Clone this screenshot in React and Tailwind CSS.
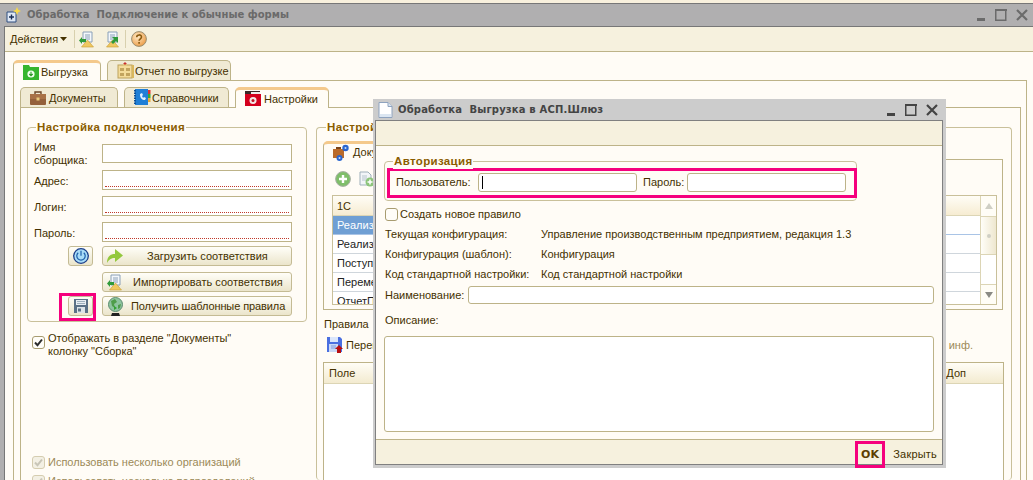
const Controls = ({ c }) => (
  <svg width="52" height="14" viewBox="0 0 52 14" className="shrink-0" style={{ color: c }}>
    <rect x="0" y="10" width="8" height="3" fill="currentColor" />
    <rect x="18.75" y="1.75" width="10" height="10.5" fill="none" stroke="currentColor" strokeWidth="1.5" />
    <rect x="18" y="1" width="12" height="2" fill="currentColor" />
    <path d="M40 2 L50 12 M50 2 L40 12" stroke="currentColor" strokeWidth="2.2" fill="none" />
  </svg>
);
const WinIcon = () => (
  <svg width="16" height="16" viewBox="0 0 16 16"><path d="M1 5h9v10H1z" fill="#dfe8f5" stroke="#2f4f80" /><path d="M3 10h5M5.5 7.5v5" stroke="#1a2f55" strokeWidth="1.4" /><path d="M11 0l1.2 2.8L15 4l-2.8 1.2L11 8 9.8 5.2 7 4l2.8-1.2z" fill="#f7d94a" /></svg>
);
const DocArrow = ({ flip }) => (
  <svg width="17" height="17" viewBox="0 0 17 17"><path d="M4 1h9v10H4z" fill="#f4f7fb" stroke="#8aa0b8" /><path d="M6 4h5M6 6h5M6 8h5" stroke="#8aa0b8" /><path d="M8.5 9l6 7h-12z" fill="#f0c860" stroke="#c89b30" strokeWidth=".6" />{flip ? <path d="M8 6l6 0v6l-2-2-3 3-2-2 3-3z" fill="#2f9a3a" /> : <path d="M7 8H3V6L0 9.5 3 13v-2h4z" fill="#2f9a3a" />}</svg>
);
const Help = () => (
  <svg width="16" height="16" viewBox="0 0 16 16"><defs><radialGradient id="h" cx=".4" cy=".35" r=".8"><stop offset="0" stopColor="#ffe9c4" /><stop offset="1" stopColor="#e88f32" /></radialGradient></defs><circle cx="8" cy="8" r="7.4" fill="url(#h)" stroke="#9a8f72" /><path d="M5.7 6.2c0-3 4.8-3 4.8-.2 0 1.8-2.4 1.800-2.400 3.800M8.100 11v1.800" fill="none" stroke="#8a5a10" strokeWidth="1.6" /></svg>
);
const GreenFolder = () => (
  <svg width="17" height="17" viewBox="0 0 17 17"><path d="M0 1h6l1 2h9v13H0z" fill="#36b52f" /><circle cx="8" cy="10" r="3.600" fill="#f2fff0" /><path d="M8 7.800v3.600M6.300 10l1.700 1.700L9.700 10" stroke="#2c9a27" fill="none" strokeWidth="1.100" /></svg>
);
const Notes = () => (
  <svg width="17" height="17" viewBox="0 0 17 17"><rect x="1" y="3" width="14" height="13" fill="#f4dc9a" stroke="#bca15c" /><path d="M3 6h4v3H3zM9 6h4v3H9zM3 11h4v3H3zM9 11h4v3H9z" fill="#c2a45e" /><path d="M6 2h4v2H6z" fill="#e2c77e" /><path d="M8 0v3M6.500 1.500h3" stroke="#c9302c" /><rect x="15" y="3" width="2" height="13" fill="#d9b75c" /></svg>
);
const Case = () => (
  <svg width="16" height="16" viewBox="0 0 16 16"><path d="M5 4V2h6v2" fill="none" stroke="#6b4526" strokeWidth="1.400" /><rect x="0" y="4" width="16" height="11" rx="1" fill="#94603a" /><rect x="0" y="4" width="16" height="5" fill="#a87146" /><rect x="6.500" y="7.500" width="3" height="3" fill="#e8c87a" /></svg>
);
const BlueBook = () => (
  <svg width="17" height="17" viewBox="0 0 17 17"><rect x="1" y="0" width="13" height="16" fill="#1f7fd6" /><path d="M1 1v14" stroke="#0c4f96" strokeWidth="2" strokeDasharray="1.500 1" /><path d="M6 5c0 4 2 6 5 6l1-2-2-1-1 1-1-2 1-1-1-2z" fill="#dff1ff" /><rect x="14" y="1" width="2.500" height="4" fill="#d33" /><rect x="14" y="5" width="2.500" height="4" fill="#3a3" /><rect x="14" y="9" width="2.500" height="4" fill="#ea3" /></svg>
);
const RedFolder = () => (
  <svg width="16" height="16" viewBox="0 0 16 16"><path d="M0 0h15v3H0z" fill="#3a2a2a" /><rect x="6" y="1" width="9" height="3" fill="#eee" /><path d="M0 3h16v12H0z" fill="#d4001e" /><circle cx="8" cy="9.500" r="3.500" fill="#f4e6e6" /><circle cx="8" cy="9.500" r="1.500" fill="#c01020" /></svg>
);
const Power = () => (
  <svg width="16" height="16" viewBox="0 0 16 16"><circle cx="8" cy="8" r="7.300" fill="#a8dcf8" stroke="#1d3f8a" strokeWidth="1.300" /><path d="M5.200 4.800a4.200 4.200 0 1 0 5.600 0" fill="none" stroke="#1d5faa" strokeWidth="1.200" /><path d="M8 2.800v5" stroke="#1d5faa" strokeWidth="1.200" /></svg>
);
const Floppy = () => (
  <svg width="16" height="16" viewBox="0 0 16 16"><rect x="1" y="1" width="14" height="14" fill="#5b7186" /><rect x="3" y="2" width="10" height="5" fill="#e8eef2" /><path d="M4 3.500h8M4 5.500h8" stroke="#9fb0bd" /><rect x="4" y="9" width="8" height="6" fill="#dde4e8" /><rect x="5" y="10.500" width="3" height="3" fill="#5b7186" /></svg>
);
const GreenArrow = () => (
  <svg width="18" height="16" viewBox="0 0 18 16"><path d="M1 15c0-6 3-9 8-9V1l8 6.500L9 14V10c-4 0-6 1.500-8 5z" fill="#93c83d" /></svg>
);
const Globe = () => (
  <svg width="17" height="19" viewBox="0 0 17 19"><circle cx="8.500" cy="7.500" r="7" fill="#8fc4a0" stroke="#5c8c70" /><path d="M4 4l4-2 2 3-3 2 1 4-3-2zM11 8l3-1-1 4-2 1z" fill="#4f9d4a" /><path d="M5 16h7l1 3H4z" fill="#222" /><path d="M7 9l3 2-3 2z" fill="#2fa32f" /></svg>
);
const Gears = () => (
  <svg width="17" height="17" viewBox="0 0 17 17"><rect x="0" y="5" width="11" height="9" fill="#b96a2a" /><rect x="3" y="3" width="5" height="2" fill="#7a4218" /><circle cx="12.500" cy="4" r="3.200" fill="#2a66d0" /><circle cx="12.500" cy="4" r="1" fill="#cde" /><circle cx="6.500" cy="14" r="3" fill="#2a66d0" /><circle cx="6.500" cy="14" r="1" fill="#cde" /></svg>
);
const AddGreen = () => (
  <svg width="16" height="16" viewBox="0 0 16 16"><circle cx="8" cy="8" r="7.400" fill="#7fbe6a" stroke="#a9b0a6" /><path d="M8 4v8M4 8h8" stroke="#fff" strokeWidth="2.400" /></svg>
);
const DocPlus = () => (
  <svg width="16" height="16" viewBox="0 0 16 16"><path d="M1 1h8l3 3v10H1z" fill="#f2f5f8" stroke="#9fb0ba" /><path d="M3 5h5M3 7h5M3 9h4" stroke="#b7c4cc" /><circle cx="11" cy="11" r="4.500" fill="#8cc47a" /><path d="M11 8.500v5M8.500 11h5" stroke="#fff" strokeWidth="1.500" /></svg>
);
const SaveRed = () => (
  <svg width="16" height="16" viewBox="0 0 16 16"><path d="M0 0h13l2 2v13H0z" fill="#4a6fe0" /><rect x="3" y="0" width="8" height="5" fill="#dbe6fb" /><rect x="2" y="7" width="9" height="8" fill="#c9d8f6" /><path d="M4 9h5M4 11h5" stroke="#7f9be0" /><path d="M12 8l4 4h-2v4h-4v-4H8z" fill="#b80d10" /></svg>
);
const Chk = ({ on, off }) => (
  <span className={`w-[13px] h-[13px] rounded-[3px] border flex items-center justify-center shrink-0 ${off ? 'border-[#d5cdb0] bg-[#f3f0e4]' : 'border-[#a89c70] bg-[#fffdf8]'}`}>
    {on && <svg width="9" height="9" viewBox="0 0 9 9"><path d="M1 4.500l2.500 2.700L8 1.500" fill="none" stroke={off ? '#c9c6b8' : '#2c2c2c'} strokeWidth="2" /></svg>}
  </span>
);
const Tab = ({ active, w, h, icon, children, gap = 'gap-[3px]', pl = 'pl-[9px]' }) => (
  <div className={`${w} ${h} ${active ? 'bg-[#fffcf6] border-t-[3px] border-t-[#f4c98c] -mb-px z-10 border-b-0' : 'bg-[#f0ead4]'} border-x border-[#bdb388] ${active ? '' : 'border-t'} rounded-t-[5px] flex items-center ${gap} ${pl} shrink-0 relative whitespace-nowrap`}>
    {icon}<span>{children}</span>
  </div>
);
const Field = ({ dotted, w = 'w-[190px]', h = 'h-[20px]' }) => (
  <div className={`${w} ${h} border border-[#bdb388] bg-white flex flex-col justify-end px-[2px] pb-[2px]`}>
    {dotted && <div className="border-b border-dotted border-[#c0392b]" />}
  </div>
);
const Btn = ({ icon, children, pl, mt, h = 'h-[20px]' }) => (
  <div className={`w-[190px] ${h} ${mt} rounded-[3px] border border-[#c4bb94] bg-gradient-to-b from-[#fffef8] to-[#ebe5cb] flex items-center pl-[2px] whitespace-nowrap`}>
    <span className="w-[20px] flex justify-center shrink-0">{icon}</span>
    <span className={pl}>{children}</span>
  </div>
);
const IconBtn = ({ children }) => (
  <div className="w-[25px] h-[20px] rounded-[3px] border border-[#c4bb94] bg-gradient-to-b from-[#fffef8] to-[#ebe5cb] flex items-center justify-center">{children}</div>
);
const Legend = ({ children, cls }) => (
  <span className={`absolute -top-[8px] ${cls} bg-[#fffcf6] px-[1px] text-[#8a5c00] font-bold text-[11.500px] leading-[15px] tracking-[0.35px] whitespace-nowrap`}>{children}</span>
);
const Row = ({ label, children, mt = 'mt-[6px]' }) => (
  <div className={`flex items-center ${mt}`}>
    <span className="w-[64px] pl-[1px] pt-[2px] mr-[5px]">{label}</span>
    {children}
  </div>
);
const rows = ['Реализация', 'Реализация', 'Поступление', 'Перемещение', 'ОтчетПроизводства'];

export default function App() {
  return (
    <div className="w-[1033px] h-[480px] relative overflow-hidden bg-[#f5eedd] font-['Liberation_Sans',sans-serif] text-[11px] leading-[14px] text-[#443100]">
      <div className="h-[3px] bg-[#f8f0dd]" />
      <div className="h-[477px] border-t border-[#777] bg-[#b0afb0] flex flex-col">
        <div className="h-[22px] flex items-center pl-[6px] pr-[4px] shrink-0">
          <WinIcon />
          <span className="ml-[5px] font-['DejaVu_Sans',sans-serif] font-bold text-[10px] text-[#6a6a6a] whitespace-pre">Обработка  Подключение к обычные формы</span>
          <span className="flex-1" />
          <Controls c="#6b6b6b" />
        </div>
        <div className="flex-1 ml-[4px] border-l border-t border-[#777] bg-[#fffcf6] flex flex-col min-h-0">
          <div className="h-[24px] shrink-0 bg-[#f6f1de] border-b border-[#bdb388] box-content flex items-center pl-[5px] text-[#443100]">
            <span>Действия</span>
            <svg width="7" height="4" viewBox="0 0 7 4" className="ml-[2px]"><path d="M0 0h7L3.500 4z" fill="#443100" /></svg>
            <span className="w-px h-[18px] bg-[#d8d0ae] ml-[7px] mr-[4px]" />
            <DocArrow />
            <span className="w-[8px]" />
            <DocArrow flip />
            <span className="w-px h-[18px] bg-[#d8d0ae] ml-[4px] mr-[5px]" />
            <Help />
          </div>
          <div className="flex-1 min-h-0 pl-[8px] pr-[6px] pt-[8px] flex flex-col">
            <div className="flex gap-[6px] items-end h-[20px] shrink-0">
              <Tab active w="w-[88px]" h="h-[21px]" icon={<GreenFolder />} gap="gap-[1px]" pl="pl-[9px]">Выгрузка</Tab>
              <Tab w="w-[124px]" h="h-[20px]" icon={<Notes />} gap="gap-[1px]">Отчет по выгрузке</Tab>
            </div>
            <div className="flex-1 min-h-0 border-x border-t border-[#bdb388] pl-[6px] pr-[5px] pt-[6px] flex flex-col">
              <div className="flex gap-[6px] items-end h-[20px] shrink-0">
                <Tab w="w-[98px]" h="h-[20px]" icon={<Case />} gap="gap-[3px]">Документы</Tab>
                <Tab w="w-[105px]" h="h-[20px]" icon={<BlueBook />} gap="gap-[1px]">Справочники</Tab>
                <Tab active w="w-[94px]" h="h-[21px]" icon={<RedFolder />} gap="gap-[3px]">Настройки</Tab>
              </div>
              <div className="flex-1 min-h-0 border-x border-t border-[#bdb388] pl-[6px] pr-[8px] pt-[19px] flex gap-[9px]">
                <div className="w-[280px] shrink-0 flex flex-col">
                  <div className="relative h-[195px] shrink-0 border border-[#c9c09a] rounded-[4px] pl-[5px] pt-[16px]">
                    <Legend cls="left-[8px]">Настройка подключения</Legend>
                    <div className="flex items-center h-[19px]">
                      <span className="w-[64px] pl-[1px] mr-[5px] leading-[13px]">Имя сборщика:</span>
                      <Field h="h-[19px]" />
                    </div>
                    <Row label="Адрес:" mt="mt-[7px]"><Field dotted /></Row>
                    <Row label="Логин:"><Field dotted /></Row>
                    <Row label="Пароль:"><Field dotted /></Row>
                    <div className="flex items-center mt-[4px]">
                      <span className="w-[69px] flex justify-end pr-[9px]"><IconBtn><Power /></IconBtn></span>
                      <Btn icon={<GreenArrow />} pl="pl-[22px]">Загрузить соответствия</Btn>
                    </div>
                    <div className="pl-[69px] mt-[6px]"><Btn icon={<DocArrow />} pl="pl-[8px]">Импортировать соответствия</Btn></div>
                    <div className="flex items-center mt-[4px]">
                      <span className="w-[69px] flex justify-end pr-[6px]">
                        <span className="border-[3px] border-[#f5007d] -mt-[3px] -mb-[5px] pb-[2px] pl-[6px] flex"><IconBtn><Floppy /></IconBtn></span>
                      </span>
                      <Btn icon={<Globe />} pl="pl-[6px]"><span className="tracking-[-0.1px]">Получить шаблонные правила</span></Btn>
                    </div>
                  </div>
                  <div className="flex items-start mt-[14px] ml-[5px] gap-[3px] shrink-0">
                    <Chk on />
                    <span className="leading-[13px] w-[205px] -mt-[4px]">Отображать в разделе "Документы" колонку "Сборка"</span>
                  </div>
                  <div className="flex items-center mt-[97px] ml-[5px] gap-[3px] text-[#9c8a58] shrink-0"><Chk on off /><span>Использовать несколько организаций</span></div>
                  <div className="flex items-center mt-[5px] ml-[5px] gap-[3px] text-[#9c8a58] whitespace-nowrap shrink-0"><Chk on off /><span>Использовать несколько подразделений</span></div>
                </div>
                <div className="flex-1 relative border border-[#c9c09a] rounded-[4px] border-b-0 pl-[6px] pr-[8px] pt-[13px] flex flex-col min-w-0">
                  <Legend cls="left-[9px]">Настройка правил</Legend>
                  <div className="h-[18px] shrink-0">
                    <Tab active w="w-[90px]" h="h-[19px]" icon={<Gears />} gap="gap-[3px]" pl="pl-[9px]">Документы</Tab>
                  </div>
                  <div className="h-[151px] shrink-0 border border-[#bdb388] pl-[8px] pr-[5px] pt-[10px]">
                    <div className="flex gap-[8px] h-[18px] items-center pl-[3px]"><AddGreen /><DocPlus /></div>
                    <div className="mt-[7px] h-[110px] border border-[#c9c09a] flex bg-white">
                      <div className="flex-1 min-w-0 flex flex-col overflow-hidden">
                        <div className="h-[20px] shrink-0 bg-gradient-to-b from-[#fffdf6] to-[#f6ecd2] border-b border-[#dcd5b5] flex items-center pl-[4px]">1С</div>
                        {rows.map((r, i) => (
                          <div key={i} className={`h-[19px] shrink-0 flex border-b ${i === 0 ? 'border-[#a9c4e6]' : 'border-[#cfd6dc]'}`}>
                            <span className={`w-[150px] pl-[4px] flex items-center ${i === 0 ? 'bg-[#6f9fd4] text-white' : 'text-[#222]'}`}>{r}</span>
                          </div>
                        ))}
                      </div>
                      <div className="w-[16px] shrink-0 border-l border-[#dcd5b5] bg-[#fffdf6] flex flex-col">
                        <div className="h-[20px] flex items-center justify-center"><svg width="8" height="8" viewBox="0 0 8 8"><path d="M4 1l4 6H0z" fill="#cfcfc4" /></svg></div>
                        <div className="h-[39px] border-y border-[#dcd5b5] bg-gradient-to-r from-[#fffef8] to-[#eee7cf] flex items-center justify-center"><span className="w-[4px] h-[4px] rounded-full bg-[#cfcfc4]" /></div>
                        <div className="flex-1 bg-white" />
                        <div className="h-[20px] flex items-center justify-center border-t border-[#dcd5b5]"><svg width="8" height="8" viewBox="0 0 8 8"><path d="M0 1h8L4 7z" fill="#8a8a84" /></svg></div>
                      </div>
                    </div>
                  </div>
                  <div className="mt-[7px] pl-[1px] leading-[14px] shrink-0">Правила</div>
                  <div className="flex items-center mt-[5px] h-[17px] pl-[4px] pr-[30px] shrink-0 gap-[3px]">
                    <SaveRed /><span>Перенести</span><span className="flex-1" /><span className="text-[#9c8a58]">инф.</span>
                  </div>
                  <div className="mt-[9px] flex-1 border-x border-t border-[#bdb388] bg-white -mr-[1px] min-h-0">
                    <div className="h-[21px] bg-gradient-to-b from-[#fffdf6] to-[#f3ebd0] border-b border-[#dcd5b5] flex items-center justify-between pl-[5px] pr-[37px]"><span>Поле</span><span>Доп</span></div>
                  </div>
                </div>
              </div>
            </div>
          </div>
        </div>
      </div>

      <div className="absolute left-[373px] top-[99px] w-[573px] h-[369px] bg-[#ccc] flex flex-col pl-[2px] pr-[3px] pb-[3px] text-[#443100] z-20">
        <div className="h-[21px] shrink-0 flex items-center pl-[2px] pr-[4px] -ml-[2px]">
          <svg width="15" height="16" viewBox="0 0 15 16" className="ml-[3px]"><path d="M1 .5h9l4 4v11H1z" fill="#fff" stroke="#8ea3bf" /><path d="M10 .5v4h4" fill="#d8e4f2" stroke="#8ea3bf" /><path d="M2 12h11v3H2z" fill="#dbe6f2" /></svg>
          <span className="ml-[5px] font-['DejaVu_Sans',sans-serif] font-bold text-[10px] tracking-[0.17px] text-[#444] whitespace-pre">Обработка  Выгрузка в АСП.Шлюз</span>
          <span className="flex-1" />
          <Controls c="#444" />
        </div>
        <div className="flex-1 min-h-0 border border-[#808080] bg-[#fffcf6] flex flex-col">
          <div className="h-[24px] shrink-0 bg-[#f6f1de] border-b border-[#bdb388] box-content" />
          <div className="flex-1 min-h-0 pl-[8px] pr-[8px] pt-[15px]">
            <div className="relative w-[473px] h-[40px] border border-[#c9c09a] rounded-[4px] pl-[2px] pt-[6px]">
              <Legend cls="left-[8px]">Авторизация</Legend>
              <div className="w-[470px] h-[30px] border-[3px] border-[#f5007d] flex items-center pl-[6px] pb-[2px] whitespace-nowrap">
                <span className="w-[82px]">Пользователь:</span>
                <div className="w-[159px] h-[19px] rounded-[3px] border border-[#bdb388] bg-white flex items-center pl-[3px]"><span className="w-px h-[13px] bg-black" /></div>
                <span className="ml-[6px] w-[44px]">Пароль:</span>
                <div className="w-[159px] h-[19px] rounded-[3px] border border-[#bdb388] bg-white" />
              </div>
            </div>
            <div className="flex items-center mt-[6px] gap-[2px] ml-[1px]"><Chk /><span>Создать новое правило</span></div>
            <div className="grid grid-cols-[156px_1fr] auto-rows-[20px] items-center mt-[3px] ml-[1px] whitespace-nowrap">
              <span>Текущая конфигурация:</span><span>Управление производственным предприятием, редакция 1.3</span>
              <span>Конфигурация (шаблон):</span><span>Конфигурация</span>
              <span>Код стандартной настройки:</span><span>Код стандартной настройки</span>
            </div>
            <div className="flex items-center mt-[2px] ml-[1px] whitespace-nowrap">
              <span className="w-[83px]">Наименование:</span>
              <div className="w-[466px] h-[18px] rounded-[3px] border border-[#bdb388] bg-white" />
            </div>
            <div className="mt-[9px] ml-[1px]">Описание:</div>
            <div className="mt-[9px] w-[550px] h-[96px] rounded-[3px] border border-[#bdb388] bg-white" />
          </div>
          <div className="h-[24px] shrink-0 bg-[#f6f1de] border-t border-[#bdb388] box-content flex items-center justify-end pr-[5px]">
            <div className="w-[30px] h-[27px] -mb-[4px] mt-[1px] border-[3px] border-[#f5007d] flex items-center justify-center font-['DejaVu_Sans',sans-serif] font-bold text-[11px] text-[#5c3d00] relative z-10">OK</div>
            <span className="ml-[7px] w-[45px] text-right pt-[3px] tracking-[0.2px]">Закрыть</span>
          </div>
        </div>
      </div>
    </div>
  );
}
